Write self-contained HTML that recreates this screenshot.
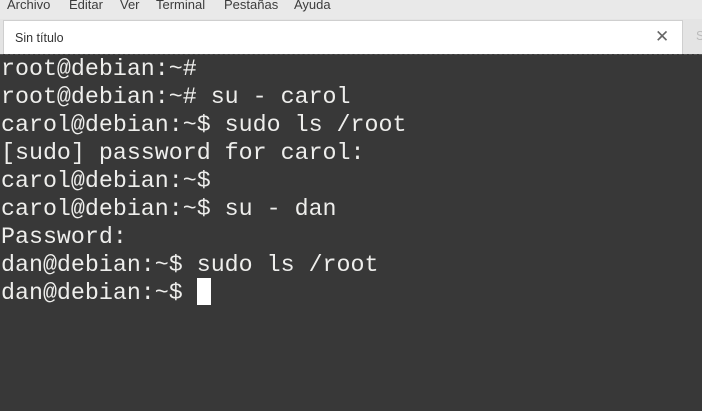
<!DOCTYPE html>
<html><head><meta charset="utf-8"><style>
body{margin:0;width:702px;height:411px;overflow:hidden;background:#383838;position:relative;font-family:"Liberation Sans",sans-serif}
#menu{position:absolute;left:0;top:0;width:702px;height:19px;background:#e9e9e9;font-size:13px;color:#3c3c3c}
#menu span{position:absolute;top:-3px}
#tabs{position:absolute;left:0;top:19px;width:702px;height:35px;background:#e4e4e4;overflow:hidden}
#tab{position:absolute;left:3px;top:1px;width:678px;height:34px;background:#fff;border:1px solid #cfcfcf;border-bottom:none}
#tab .t{position:absolute;left:11px;top:10px;font-size:12.5px;color:#333}
#tab .x{position:absolute;left:651px;top:6px;font-size:17px;color:#666}
#s{position:absolute;left:696px;top:10px;font-size:12.5px;color:#bbb}
#term{position:absolute;left:0;top:54px;border-top:1px dashed #555;width:702px}
pre{margin:0;position:absolute;left:1px;top:55px;font-family:"Liberation Mono","DejaVu Sans Mono",monospace;font-size:23.3px;line-height:28px;color:#eeeeec}
#cur{position:absolute;left:197px;top:278px;width:14px;height:27px;background:#fff}
</style></head><body>
<div id="menu"><span style="left:7px">Archivo</span><span style="left:69px">Editar</span><span style="left:120px">Ver</span><span style="left:156px">Terminal</span><span style="left:224px">Pestañas</span><span style="left:294px">Ayuda</span></div>
<div id="tabs"><div id="tab"><span class="t">Sin título</span><span class="x">✕</span></div><span id="s">S</span></div>
<div id="term"></div>
<pre>root@debian:~#
root@debian:~# su - carol
carol@debian:~$ sudo ls /root
[sudo] password for carol:
carol@debian:~$
carol@debian:~$ su - dan
Password:
dan@debian:~$ sudo ls /root
dan@debian:~$</pre>
<div id="cur"></div>
</body></html>
